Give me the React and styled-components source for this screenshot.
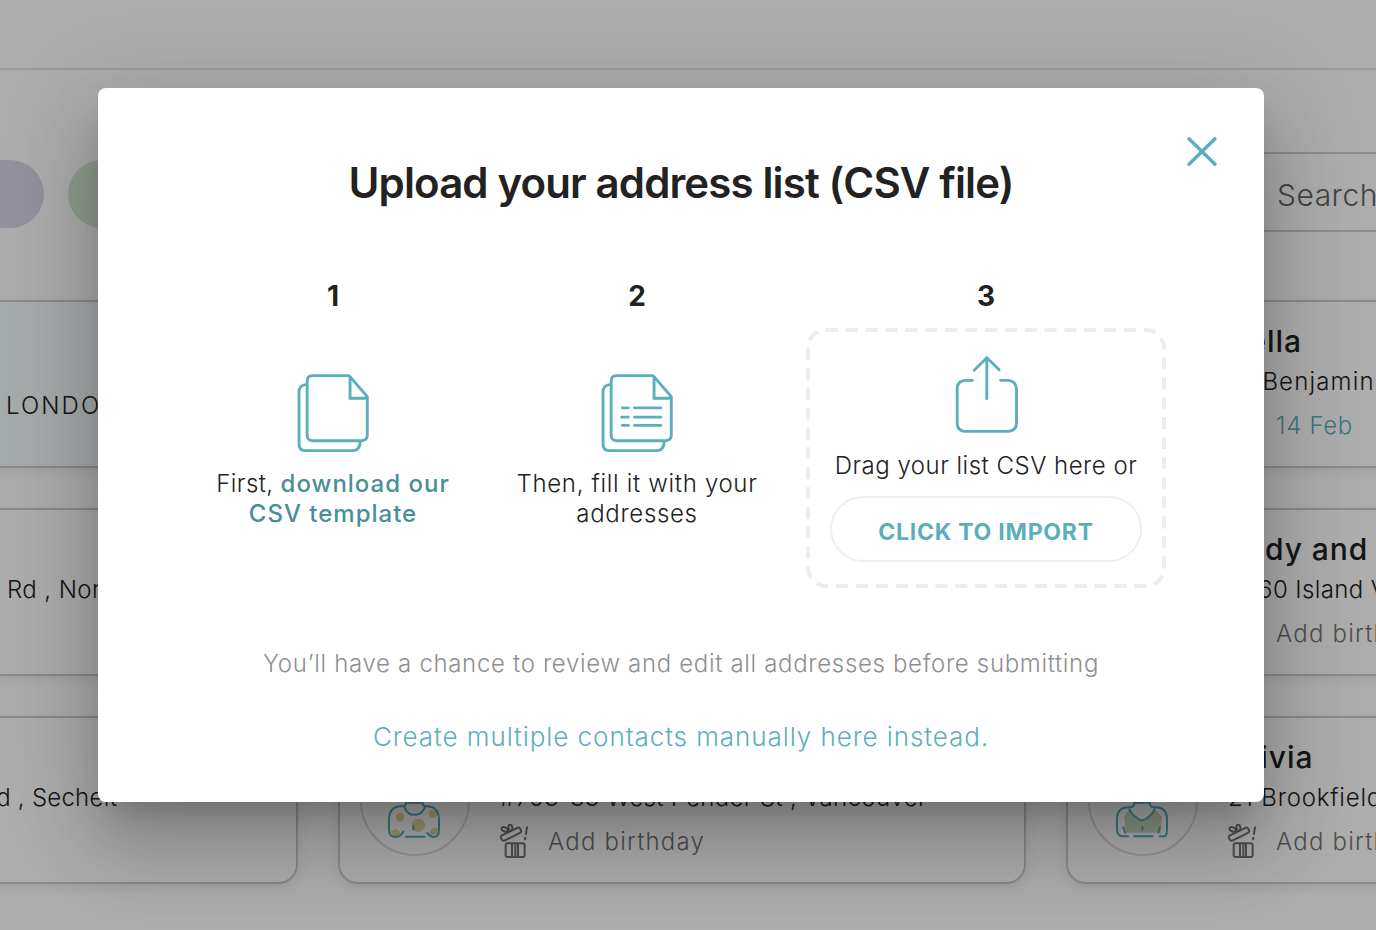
import React from "react";
import styled, { createGlobalStyle } from "styled-components";

const TEAL = "#5bafbc";

const GlobalStyle = createGlobalStyle`
  *, *::before { box-sizing: border-box; }
  body { margin: 0; font-family: Inter, "Open Sans", sans-serif; color: #222; }
  h1, h2, p { margin: 0; }
  button { font: inherit; cursor: pointer; }
`;

const Page = styled.div`
  position: relative;
  width: 1376px;
  height: 930px;
  overflow: hidden;
  background: #fff;
`;

const Header = styled.header`
  height: 70px;
  border-bottom: 2px solid #e3e3e3;
`;

const Toolbar = styled.div`
  display: flex;
  align-items: center;
  justify-content: space-between;
  height: 80px;
  margin-top: 82px;
`;

const Filters = styled.div`
  display: flex;
  gap: 24px;
  margin: 4px 0 0 -96px;
`;

const Pill = styled.span`
  width: 140px;
  height: 68px;
  border-radius: 34px;
  background: ${(p) => p.$color};
`;

const SearchBox = styled.div`
  flex: none;
  width: 160px;
  height: 80px;
  padding-left: 59px;
  border: 2px solid #cfcfcf;
  border-right: 0;
  border-radius: 40px 0 0 40px;
  color: #656565;
  font-size: 30px;
  font-weight: 300;
  line-height: 83px;
  letter-spacing: 0.5px;
  white-space: nowrap;
`;

const Cards = styled.div`
  display: grid;
  grid-template-columns: repeat(3, 688px);
  grid-auto-rows: 168px;
  gap: 40px;
  margin: 68px 0 0 -390px;
`;

const Card = styled.article`
  display: flex;
  align-items: center;
  padding-left: ${(p) => p.$inset || 20}px;
  border: 2px solid #cbcbcb;
  border-radius: 20px;
  background: ${(p) => (p.$selected ? "#f5fdfc" : "#fff")};
  box-shadow: 0 4px 12px rgba(0, 0, 0, 0.08);
`;

const Avatar = styled.div`
  display: flex;
  justify-content: center;
  align-items: center;
  width: 110px;
  height: 110px;
  margin: 2px 30px 0 0;
  border: 2px solid #dedede;
  border-radius: 50%;

  svg { margin: 35px 2px 0 0; }
`;

const Details = styled.div`
  display: flex;
  flex-direction: column;
  align-items: flex-start;
  margin-top: ${(p) => p.$drop}px;
  white-space: nowrap;
`;

const Name = styled.h2`
  height: 40px;
  font-size: 30px;
  font-weight: 500;
  line-height: 38px;
  letter-spacing: 0.9px;
`;

const Address = styled.p`
  height: 40px;
  font-size: 24px;
  font-weight: 300;
  line-height: 40px;
  letter-spacing: ${(p) => p.$track || 0.5}px;
`;

const Birthday = styled.div`
  display: flex;
  align-items: center;
  gap: 20px;
  height: 48px;
  color: ${(p) => (p.$known ? TEAL : "#757575")};
  font-size: 24px;
  font-weight: 300;
  letter-spacing: ${(p) => (p.$known ? 0.7 : 1.2)}px;

  svg { margin-top: -2px; }
  span { margin-top: -2px; }
`;

const Backdrop = styled.div`
  position: absolute;
  inset: 0;
  display: flex;
  align-items: flex-start;
  padding: 88px 0 0 98px;
  background: rgba(0, 0, 0, 0.32);
`;

const Dialog = styled.section`
  position: relative;
  display: flex;
  flex-direction: column;
  align-items: center;
  width: 1166px;
  height: 714px;
  padding-top: 67px;
  border-radius: 8px;
  background: #fff;
  box-shadow:
    0 22px 30px -14px rgba(0, 0, 0, 0.2),
    0 48px 76px 6px rgba(0, 0, 0, 0.14),
    0 18px 92px 16px rgba(0, 0, 0, 0.12);
`;

const CloseButton = styled.button`
  position: absolute;
  top: 47px;
  right: 45px;
  width: 34px;
  height: 34px;
  padding: 0;
  border: 0;
  background: none;

  svg { display: block; }
`;

const Title = styled.h1`
  font-size: 42px;
  font-weight: 600;
  line-height: 56px;
  letter-spacing: -0.87px;
  white-space: nowrap;
`;

const Steps = styled.div`
  display: flex;
  align-self: flex-start;
  margin: 69px 0 0 83px;
`;

const Step = styled.div`
  display: flex;
  flex-direction: column;
  align-items: center;
  width: 304px;

  svg { display: block; margin: 62px 0 0; }
`;

const ImportStep = styled(Step)`
  width: 360px;
  margin-left: 17px;
`;

const StepNumber = styled.div`
  font-size: 28px;
  font-weight: 700;
  line-height: 33px;
  height: 32px;
`;

const StepText = styled.p`
  margin-top: 17px;
  font-size: 24px;
  font-weight: 300;
  line-height: 30px;
  letter-spacing: ${(p) => p.$track || 0.5}px;
  text-align: center;
  white-space: nowrap;
`;

const TemplateLink = styled.a`
  color: #478f99;
  font-weight: 500;
  letter-spacing: 1px;
`;

const DropZone = styled.div`
  position: relative;
  display: flex;
  flex-direction: column;
  align-items: center;
  width: 360px;
  height: 260px;
  margin-top: 16px;
  padding-top: 28px;

  &::before {
    content: "";
    position: absolute;
    top: 0;
    left: 0;
    width: 50%;
    height: 50%;
    border: 2px dashed #ededed;
    border-radius: 10px;
    transform: scale(2);
    transform-origin: 0 0;
    pointer-events: none;
  }

  svg { margin: 0 0 1px 1px; }
`;

const ImportButton = styled.button`
  width: 312px;
  height: 66px;
  margin-top: 15px;
  padding: 5px 0 0;
  border: 2px solid #eee;
  border-radius: 33px;
  background: #fff;
  color: ${TEAL};
  font-size: 23px;
  font-weight: 700;
  letter-spacing: 0.75px;
`;

const Note = styled.p`
  margin-top: 61px;
  color: #8f8f8f;
  font-size: 24px;
  font-weight: 300;
  line-height: 30px;
  letter-spacing: 0.67px;
  white-space: nowrap;
`;

const ManualLink = styled.a`
  margin-top: 42px;
  color: ${TEAL};
  font-size: 26px;
  font-weight: 300;
  line-height: 32px;
  letter-spacing: 0.93px;
  white-space: nowrap;
`;

const FilesIcon = ({ filled }) => (
  <svg width="72" height="78" viewBox="0 0 213 235" preserveAspectRatio="none" fill="none" stroke={TEAL} strokeWidth="8.5" strokeLinejoin="round">
    <path d="M46 5H154L208 68V184Q208 201 191 201H46Q30 201 30 184V22Q30 5 46 5Z" />
    <path d="M157 6V73H208" strokeLinejoin="miter" />
    <path d="M30 32Q7 32 6 52V211Q6 231 26 231H166Q186 230 187 204" />
    {filled && (
      <path strokeLinecap="round" d="M63 102H81M99 102H177M61 130H81M99 130H177M63 155H81M99 155H177" />
    )}
  </svg>
);

const ShareIcon = () => (
  <svg width="63" height="77" viewBox="0 0 188 231" fill="none" stroke={TEAL} strokeWidth="8.5" strokeLinecap="round" strokeLinejoin="round">
    <path d="M95 5V128M57 43L95 5L132 41" />
    <path d="M52 73H30Q6 75 6 98V204Q8 224 28 226H160Q182 224 184 204V98Q182 75 160 73H136" />
  </svg>
);

const CloseIcon = () => (
  <svg width="34" height="34" viewBox="0 0 34 34" stroke={TEAL} strokeWidth="3.4" strokeLinecap="round">
    <path d="M4 3.7L30 29.3M30 3.7L4 29.3" />
  </svg>
);

const GiftIcon = () => (
  <svg width="28" height="34" viewBox="0 0 84 102" fill="none" stroke="#757575" strokeWidth="6">
    <rect x="17" y="58" width="57" height="41" rx="6" />
    <path d="M36 58V99M46 58V99M54 58V99" />
    <rect x="1" y="22" width="64" height="17" rx="6" transform="rotate(-26 33 31)" />
    <ellipse cx="14" cy="16" rx="10" ry="6" transform="rotate(20 14 16)" />
    <ellipse cx="31" cy="11" rx="6" ry="9" transform="rotate(-8 31 11)" />
    <path d="M81 10L78 30M76 41L75 46" strokeLinecap="round" />
  </svg>
);

const SpottedTop = () => (
  <svg width="52" height="38" viewBox="0 0 156 114" fill="none" stroke={TEAL} strokeWidth="6" strokeLinecap="round">
    <g fill="#e6d9a3" stroke="none">
      <circle cx="36" cy="52" r="13" />
      <circle cx="91" cy="76" r="20" />
      <circle cx="134" cy="42" r="12" />
      <path d="M8 97Q24 77 38 98L30 109H18Z" />
      <path d="M124 97Q134 77 149 85L149 97Q142 107 130 107Z" />
    </g>
    <path d="M54 5V12Q52 19 40 19C14 19 3 34 3 60V90Q3 111 24 111Q36 111 46 95" />
    <path d="M104 5V12Q106 19 116 19C142 19 153 34 153 60V90Q153 111 136 111Q128 111 118 99" />
    <path d="M50 22C60 52 100 52 110 22M54 110H110M76 78V88M58 8H98" />
  </svg>
);

const PlainTop = () => (
  <svg width="52" height="38" viewBox="0 0 156 114" fill="none" stroke={TEAL} strokeWidth="6" strokeLinecap="round">
    <path fill="#c8dcc0" stroke="none" d="M24 50L38 30Q50 54 78 62Q106 54 118 30L138 50L134 98H30Z" />
    <path d="M54 5V14Q52 22 38 22C14 22 3 36 3 58V86Q3 109 22 109H37" />
    <path d="M102 5V14Q104 22 118 22C142 22 153 36 153 58V86Q153 109 144 109H131" />
    <path d="M40 28Q50 50 78 62Q106 50 116 28M54 109H110M22 82L27 98M132 82L127 98M79 81V91M58 8H98" />
  </svg>
);

const Birth = ({ date }) => (
  <Birthday $known={!!date}>
    <GiftIcon />
    <span>{date || "Add birthday"}</span>
  </Birthday>
);

const Contact = ({ name, address, date, icon, track }) => (
  <Card>
    <Avatar>{icon}</Avatar>
    <Details $drop={4}>
      <Name>{name}</Name>
      <Address $track={track}>{address}</Address>
      <Birth date={date} />
    </Details>
  </Card>
);

export default function App() {
  return (
    <Page>
      <GlobalStyle />
      <Header />
      <Toolbar>
        <Filters>
          <Pill $color="#d9d6e6" />
          <Pill $color="#d5e8d3" />
        </Filters>
        <SearchBox>Search</SearchBox>
      </Toolbar>
      <Cards>
        <Card $inset={394} $selected>
          <Details $drop={44}><Address $track={2.1}>LONDON</Address></Details>
        </Card>
        <Card />
        <Contact name="Bella" address="12 Benjamin" date="14 Feb" icon={<PlainTop />} track={1.15} />
        <Card $inset={395}>
          <Details $drop={-4}><Address $track={0.4}>Rd , North</Address></Details>
        </Card>
        <Card />
        <Contact name="Judy and" address="2360 Island View" icon={<PlainTop />} track={0.4} />
        <Card $inset={369}>
          <Details $drop={-4}><Address $track={0.25}>Rd , Sechelt</Address></Details>
        </Card>
        <Contact address="#703-33 West Pender St , Vancouver" icon={<SpottedTop />} track={0.35} />
        <Contact name="Olivia" address="21 Brookfield" icon={<PlainTop />} track={0.8} />
      </Cards>
      <Backdrop>
        <Dialog role="dialog">
          <CloseButton aria-label="Close"><CloseIcon /></CloseButton>
          <Title>Upload your address list (CSV file)</Title>
          <Steps>
            <Step>
              <StepNumber>1</StepNumber>
              <FilesIcon />
              <StepText $track={0.4}>
                First, <TemplateLink>download our<br />CSV template</TemplateLink>
              </StepText>
            </Step>
            <Step>
              <StepNumber>2</StepNumber>
              <FilesIcon filled />
              <StepText $track={0.68}>Then, fill it with your<br />addresses</StepText>
            </Step>
            <ImportStep>
              <StepNumber>3</StepNumber>
              <DropZone>
                <ShareIcon />
                <StepText $track={0.5}>Drag your list CSV here or</StepText>
                <ImportButton>CLICK TO IMPORT</ImportButton>
              </DropZone>
            </ImportStep>
          </Steps>
          <Note>You’ll have a chance to review and edit all addresses before submitting</Note>
          <ManualLink>Create multiple contacts manually here instead.</ManualLink>
        </Dialog>
      </Backdrop>
    </Page>
  );
}
